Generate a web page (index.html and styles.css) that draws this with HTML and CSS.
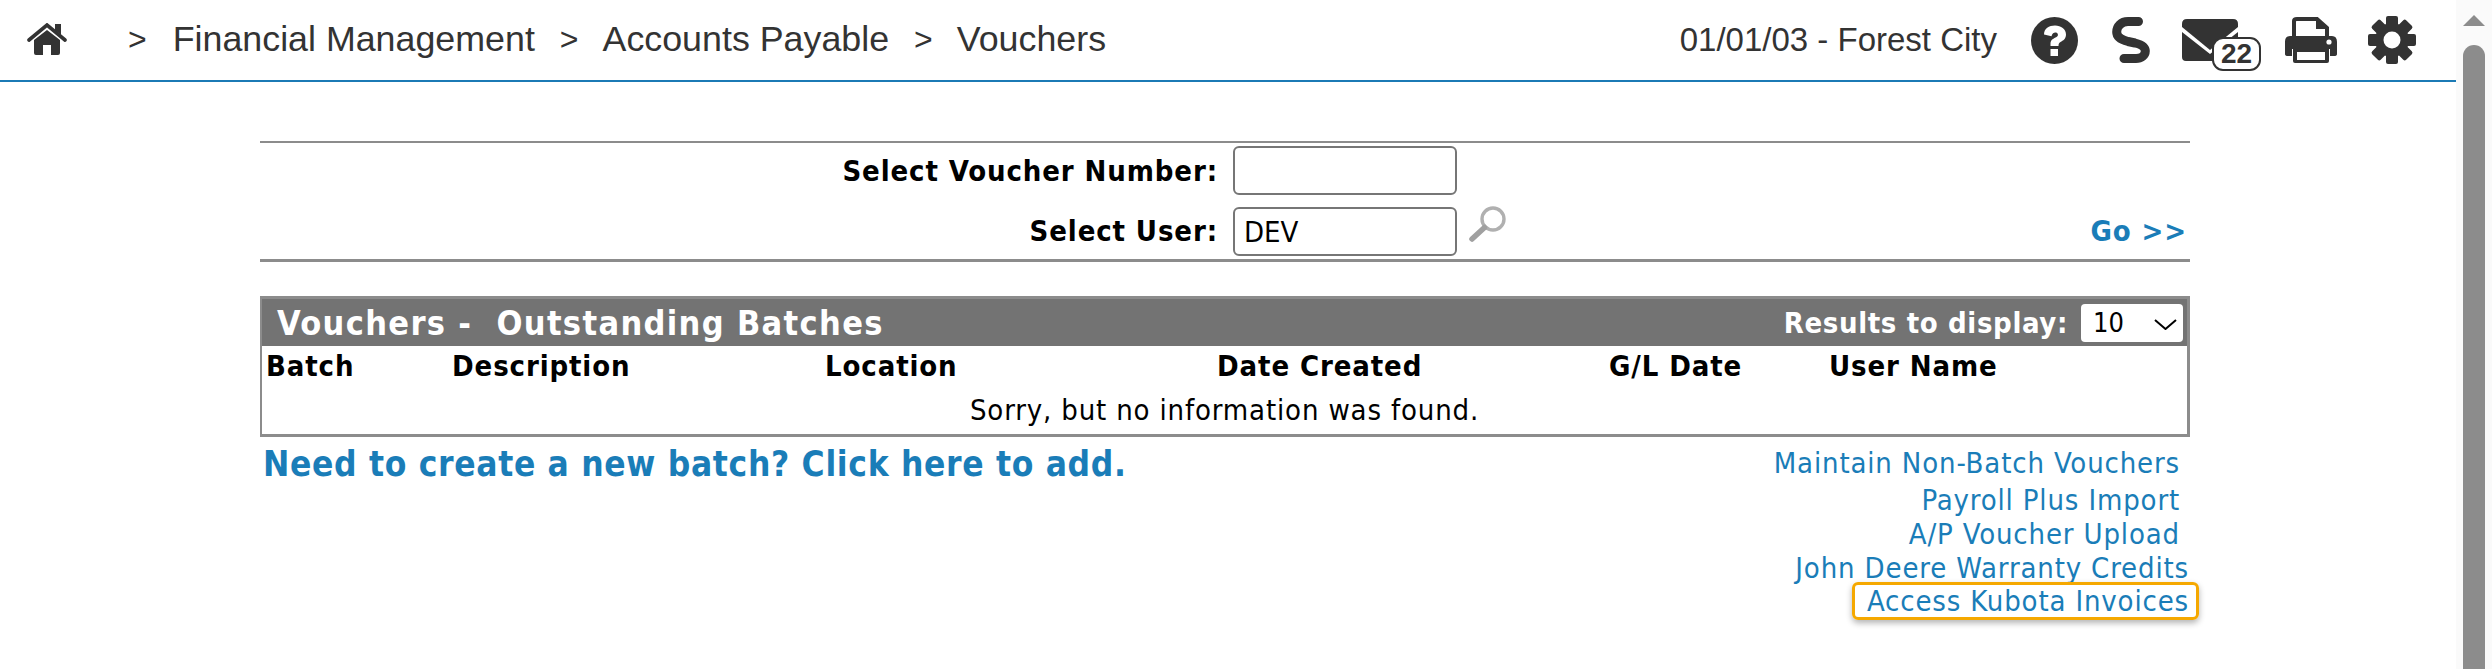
FILE: index.html
```html
<!DOCTYPE html>
<html lang="en">
<head>
<meta charset="utf-8">
<title>Vouchers</title>
<link rel="stylesheet" href="styles.css">
</head>
<body>
<div class="window">
  <div class="page">
    <header class="topbar">
      <nav class="crumbs">
        <svg class="home" viewBox="0 0 40 32" width="40" height="32"><path d="M2 17 L20 2 L38 17" fill="none" stroke="#333" stroke-width="3.6" stroke-linecap="round" stroke-linejoin="miter"/><path d="M28 1h6v11l-6-5z" fill="#333"/><path d="M7 17 L20 7 L33 17 V30 Q33 32 31 32 H24 V22 H16 V32 H9 Q7 32 7 30 Z" fill="#333"/></svg>
        <span class="sep first">&gt;</span><a class="crumb">Financial Management</a>
        <span class="sep">&gt;</span><a class="crumb">Accounts Payable</a>
        <span class="sep">&gt;</span><a class="crumb">Vouchers</a>
      </nav>
      <div class="tools">
        <span class="context">01/01/03 - Forest City</span>
        <svg class="tool" viewBox="0 0 47 47" width="47" height="47"><circle cx="23.5" cy="23.5" r="23.5" fill="#333"/><path d="M13 17.5 C13 11.5 18 8.5 24 8.5 C30 8.5 35 12 35 17.5 C35 22 32 23.5 29.5 25 C27.8 26 27.5 27 27.5 29 H19.5 V26.5 C19.5 22.5 23 21.5 25.5 20 C27 19 27.3 18 26.5 16.5 C25.5 15 21.5 14.8 20.5 19.2 Z" fill="#fff"/><rect x="19.5" y="32" width="7.5" height="7" fill="#fff"/></svg>
        <svg class="tool s-link" viewBox="0 0 38 46" width="38" height="46"><path d="M26.5 4.5 H16 C9 4.5 4.7 9.5 4.7 15 C4.7 21 10 23 16 24.5 L23 26 C29 27.5 33.3 30 33.3 34 C33.3 38.5 29 41.5 24 41.5 H12" fill="none" stroke="#333" stroke-width="9" stroke-linecap="round"/></svg>
        <span class="mail">
          <svg viewBox="0 0 56 42" width="56" height="42"><path d="M5 0 H51 Q56 0 56 5 V8 L28 31 L0 8 V5 Q0 0 5 0 Z" fill="#333"/><path d="M0 13 L28 35 L56 13 V38 Q56 42 52 42 H4 Q0 42 0 38 Z" fill="#333"/></svg>
          <span class="badge">22</span>
        </span>
        <svg class="tool print" viewBox="0 0 54 46" width="54" height="46"><path d="M10 22 V4 Q10 2 13 2 H33 L43 11 V22" fill="none" stroke="#333" stroke-width="4"/><path d="M32 1 V12 H43 Z" fill="#333"/><path d="M6 19 H48 Q53 19 53 25 V37 Q53 39 50 39 H46 V32 H8 V39 H4 Q1 39 1 37 V25 Q1 19 6 19 Z" fill="#333"/><path d="M9 32 H45 V44 Q45 46 43 46 H11 Q9 46 9 44 Z" fill="#333"/><rect x="13" y="35" width="28" height="8" fill="#fff"/><circle cx="45" cy="25" r="2.6" fill="#fff"/></svg>
        <svg class="tool gear" viewBox="0 0 48 48" width="48" height="48"><g fill="#333"><circle cx="24" cy="24" r="17"/><rect x="18" y="0" width="12" height="48" rx="2"/><rect x="18" y="0" width="12" height="48" rx="2" transform="rotate(45 24 24)"/><rect x="18" y="0" width="12" height="48" rx="2" transform="rotate(90 24 24)"/><rect x="18" y="0" width="12" height="48" rx="2" transform="rotate(135 24 24)"/></g><circle cx="24" cy="24" r="8.5" fill="#fff"/></svg>
      </div>
    </header>

    <main class="content">
      <form class="filter">
        <div class="filter-row">
          <label class="filter-label">Select Voucher Number:</label>
          <input class="filter-input" type="text">
        </div>
        <div class="filter-row">
          <label class="filter-label raised">Select User:</label>
          <input class="filter-input" type="text" value="DEV">
          <svg class="lens" viewBox="0 0 40 38" width="40" height="38"><circle cx="25" cy="14" r="11" fill="#fff" stroke="#b0b0b0" stroke-width="3.4"/><path d="M16.5 22.5 L4 34" stroke="#a0a0a0" stroke-width="5.5" stroke-linecap="round"/></svg>
          <a class="go raised">Go &gt;&gt;</a>
        </div>
      </form>

      <section class="batches">
        <div class="batches-title">
          <h1 class="title">Vouchers -&nbsp; Outstanding Batches</h1>
          <label class="results">Results to display:</label>
          <span class="select-wrap">
            <select class="results-select"><option>10</option><option>25</option><option>50</option></select>
            <svg class="chevron" viewBox="0 0 23 11" width="23" height="11"><path d="M1 1 L11.5 10 L22 1" fill="none" stroke="#000" stroke-width="2"/></svg>
          </span>
        </div>
        <table class="grid">
          <thead>
            <tr><th class="c-batch">Batch</th><th class="c-desc">Description</th><th class="c-loc">Location</th><th class="c-date">Date Created</th><th class="c-gl">G/L Date</th><th>User Name</th></tr>
          </thead>
          <tbody>
            <tr><td colspan="6" class="empty">Sorry, but no information was found.</td></tr>
          </tbody>
        </table>
      </section>

      <div class="below">
        <a class="add">Need to create a new batch? Click here to add.</a>
        <ul class="links">
          <li class="inset first-link"><a>Maintain Non-Batch Vouchers</a></li>
          <li class="inset"><a>Payroll Plus Import</a></li>
          <li class="inset"><a>A/P Voucher Upload</a></li>
          <li><a>John Deere Warranty Credits</a></li>
          <li class="last-link"><a class="highlight">Access Kubota Invoices</a></li>
        </ul>
      </div>
    </main>
  </div>
  <div class="scrollbar"><span class="scroll-up"></span><span class="scroll-thumb"></span></div>
</div>
</body>
</html>
```

FILE: styles.css
```css
* { box-sizing: border-box; }
html, body { margin: 0; height: 100%; overflow: hidden; background: #fff; }
.window { display: flex; height: 669px; }
.page { flex: 1; min-width: 0; }

.topbar {
  height: 82px;
  border-bottom: 2px solid #1b7ab5;
  display: flex;
  align-items: center;
  justify-content: space-between;
  font-family: "Liberation Sans", Arial, sans-serif;
  color: #333;
}
.crumbs { display: flex; align-items: center; padding-left: 27px; font-size: 35.8px; padding-bottom: 2px; }
.home { display: block; }
.sep { font-size: 32px; margin: 0 24px 0 25px; }
.sep.first { margin-left: 61px; margin-right: 26px; }
.tools { display: flex; align-items: center; padding-right: 40px; }
.context { font-size: 33px; margin-right: 34px; }
.tool { display: block; }
.s-link { margin-left: 34px; }
.mail { position: relative; display: block; width: 56px; height: 42px; margin-left: 32px; }
.mail svg { display: block; }
.badge {
  position: absolute; left: 30px; top: 18px;
  width: 49px; height: 34px;
  background: #fff; border: 2px solid #333; border-radius: 11px;
  font-size: 28px; font-weight: bold; line-height: 30px; text-align: center;
}
.print { margin-left: 46px; }
.gear { margin-left: 30px; }

.content {
  width: 1930px;
  margin: 59px 0 0 260px;
  font-family: "DejaVu Sans", Verdana, sans-serif;
  font-stretch: condensed;
  font-size: 29px;
  letter-spacing: 0.84px;
}
.filter {
  border-top: 2px solid #8c8c8c;
  border-bottom: 3px solid #8c8c8c;
  height: 121px;
  padding-top: 3px;
  display: flex; flex-direction: column; gap: 12px;
}
.filter-row { display: flex; align-items: center; height: 49px; }
.filter-label { width: 958px; text-align: right; font-weight: bold; color: #000; letter-spacing: 0.88px; }
.raised { margin-bottom: 2px; }
.filter-input {
  width: 224px; height: 49px; margin-left: 15px;
  border: 2px solid #767676; border-radius: 6px; background: #fff;
  padding: 2px 9px;
  font: inherit; letter-spacing: 0; color: #000;
}
.lens { display: block; margin: -16px 0 0 11px; }
.go { margin-left: auto; margin-right: 3px; color: #1a7db8; font-weight: bold; letter-spacing: 0.88px; }

.batches { margin-top: 34px; border: 3px solid #8c8c8c; border-left-width: 2px; border-bottom-width: 3px; height: 141px; }
.batches-title {
  height: 47px; background: #737373; color: #fff;
  display: flex; align-items: center; padding: 0 4px 0 15px;
}
.title { margin: 0; font-size: 34px; font-weight: bold; flex: 1; letter-spacing: 1.35px; }
.results { font-weight: bold; margin-right: 13px; letter-spacing: 0.63px; }
.select-wrap { position: relative; display: block; width: 102px; height: 38px; }
.results-select {
  display: block; width: 102px; height: 38px; border: 0; border-radius: 4px; background: #fff;
  appearance: none;
  font: inherit; font-size: 27px; letter-spacing: 0; color: #000; padding-left: 12px;
}
.chevron { position: absolute; right: 6px; top: 15px; display: block; pointer-events: none; }
.grid { width: 100%; border-collapse: collapse; table-layout: fixed; }
.grid th { padding: 0 0 2px 4px; height: 42px; text-align: left; font-weight: bold; color: #000; letter-spacing: 0.88px; }
.c-batch { width: 186px; }
.c-desc { width: 373px; }
.c-loc { width: 392px; }
.c-date { width: 392px; }
.c-gl { width: 220px; }
.empty { text-align: center; height: 42px; padding: 2px 0 0; color: #000; }

.below { display: flex; justify-content: space-between; padding: 7px 1px 0 3px; color: #1a7db8; }
.add { font-size: 35px; font-weight: bold; letter-spacing: 0.68px; }
.links { list-style: none; margin: 0; padding: 2px 0 0; text-align: right; }
.links li { height: 34px; line-height: 34px; }
.first-link { margin-bottom: 3px; }
.inset { padding-right: 9px; }
.last-link { display: flex; justify-content: flex-end; }
.highlight {
  display: block; height: 38px; line-height: 32px;
  margin: -3px -10px 0 0;
  padding: 0 7px 0 12px;
  border: 3px solid #f5a800; border-radius: 6px;
  box-shadow: 0 3px 6px rgba(0,0,0,.3);
}

.scrollbar { width: 36px; background: #fafafa; display: flex; flex-direction: column; align-items: center; }
.scroll-up { display: block; width: 0; height: 0; margin-top: 15px; border: 11px solid transparent; border-top: 0; border-bottom-color: #8c8c8c; }
.scroll-thumb { display: block; flex: 1; width: 22px; margin-top: 19px; background: #8c8c8c; border-radius: 11px 11px 0 0; }
```
